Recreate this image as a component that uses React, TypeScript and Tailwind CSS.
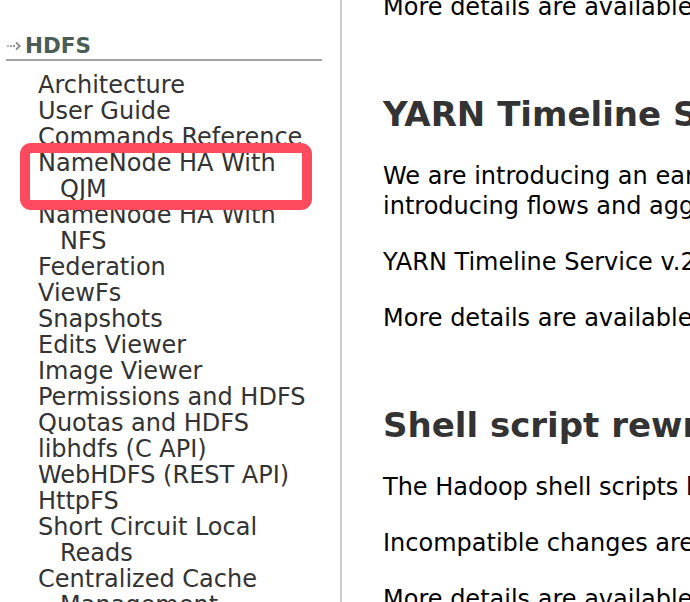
import React from "react";

const items: string[] = [
  "Architecture",
  "User Guide",
  "Commands Reference",
  "NameNode HA With QJM",
  "NameNode HA With NFS",
  "Federation",
  "ViewFs",
  "Snapshots",
  "Edits Viewer",
  "Image Viewer",
  "Permissions and HDFS",
  "Quotas and HDFS",
  "libhdfs (C API)",
  "WebHDFS (REST API)",
  "HttpFS",
  "Short Circuit Local Reads",
  "Centralized Cache Management",
  "NFS Gateway",
];

function Arrow() {
  return (
    <svg width="16" height="10" viewBox="0 0 16 10" className="shrink-0">
      <rect x="1" y="4" width="2" height="2" fill="#b5b5b5" />
      <rect x="4" y="4" width="2" height="2" fill="#a5a5a5" />
      <rect x="7" y="4" width="2" height="2" fill="#959595" />
      <path d="M10 1.3 L13.8 5 L10 8.7" fill="none" stroke="#888888" strokeWidth="1.8" />
    </svg>
  );
}

export default function App() {
  return (
    <div
      className="relative flex w-[690px] h-[602px] overflow-hidden bg-white"
      style={{ fontFamily: '"DejaVu Sans", Verdana, sans-serif' }}
    >
      {/* Sidebar */}
      <div className="w-[342px] shrink-0 border-r-2 border-[#cccccc] h-full overflow-hidden">
        <div className="ml-[6px] w-[316px] pt-[33px] border-b-2 border-[#a3a3a3]">
          <div className="flex items-center h-[26px] gap-[3px]">
            <Arrow />
            <span className="text-[21.5px] leading-[26px] font-bold text-[#4a5d56]">HDFS</span>
          </div>
        </div>
        <ul className="ml-[38px] w-[284px] mt-[11px] text-[24px] leading-[26px] text-[#333333]">
          {items.map((t) => (
            <li key={t} className="pl-[22px] -indent-[22px]">
              {t}
            </li>
          ))}
        </ul>
      </div>

      {/* Content */}
      <div className="flex-1 overflow-hidden pl-[41px] h-full">
        <div className="mt-[-8px] whitespace-nowrap text-[24px] leading-[30px] text-[#000000]">
          <p className="mb-[26px]">More details are available in the HDFS Erasure Coding documentation.</p>
          <h2 className="mt-[70px] mb-[25px] text-[34px] leading-[44px] font-bold text-[#333333]">
            YARN Timeline Service v.2
          </h2>
          <p className="mb-[26px]">
            We are introducing an early preview (alpha 2) of a major revision of YARN Timeline Service: v.2.
            <br />
            introducing flows and aggregation.
          </p>
          <p className="mb-[26px]">
            YARN Timeline Service v.2 alpha 2 is provided so that users and developers can test it.
          </p>
          <p className="mb-[26px]">More details are available in the YARN Timeline Service v.2 documentation.</p>
          <h2 className="mt-[70px] mb-[25px] text-[34px] leading-[44px] font-bold text-[#333333]">
            Shell script rewrite
          </h2>
          <p className="mb-[26px]">The Hadoop shell scripts have been rewritten to fix many long-standing bugs.</p>
          <p className="mb-[26px]">Incompatible changes are documented in the release notes.</p>
          <p className="mb-[26px]">More details are available in the Unix Shell Guide documentation.</p>
        </div>
      </div>

      {/* Highlight box */}
      <div className="absolute left-[20px] top-[143px] w-[292px] h-[67px] border-[10px] border-[#fd4a5e] rounded-[11px] pointer-events-none" />
    </div>
  );
}
